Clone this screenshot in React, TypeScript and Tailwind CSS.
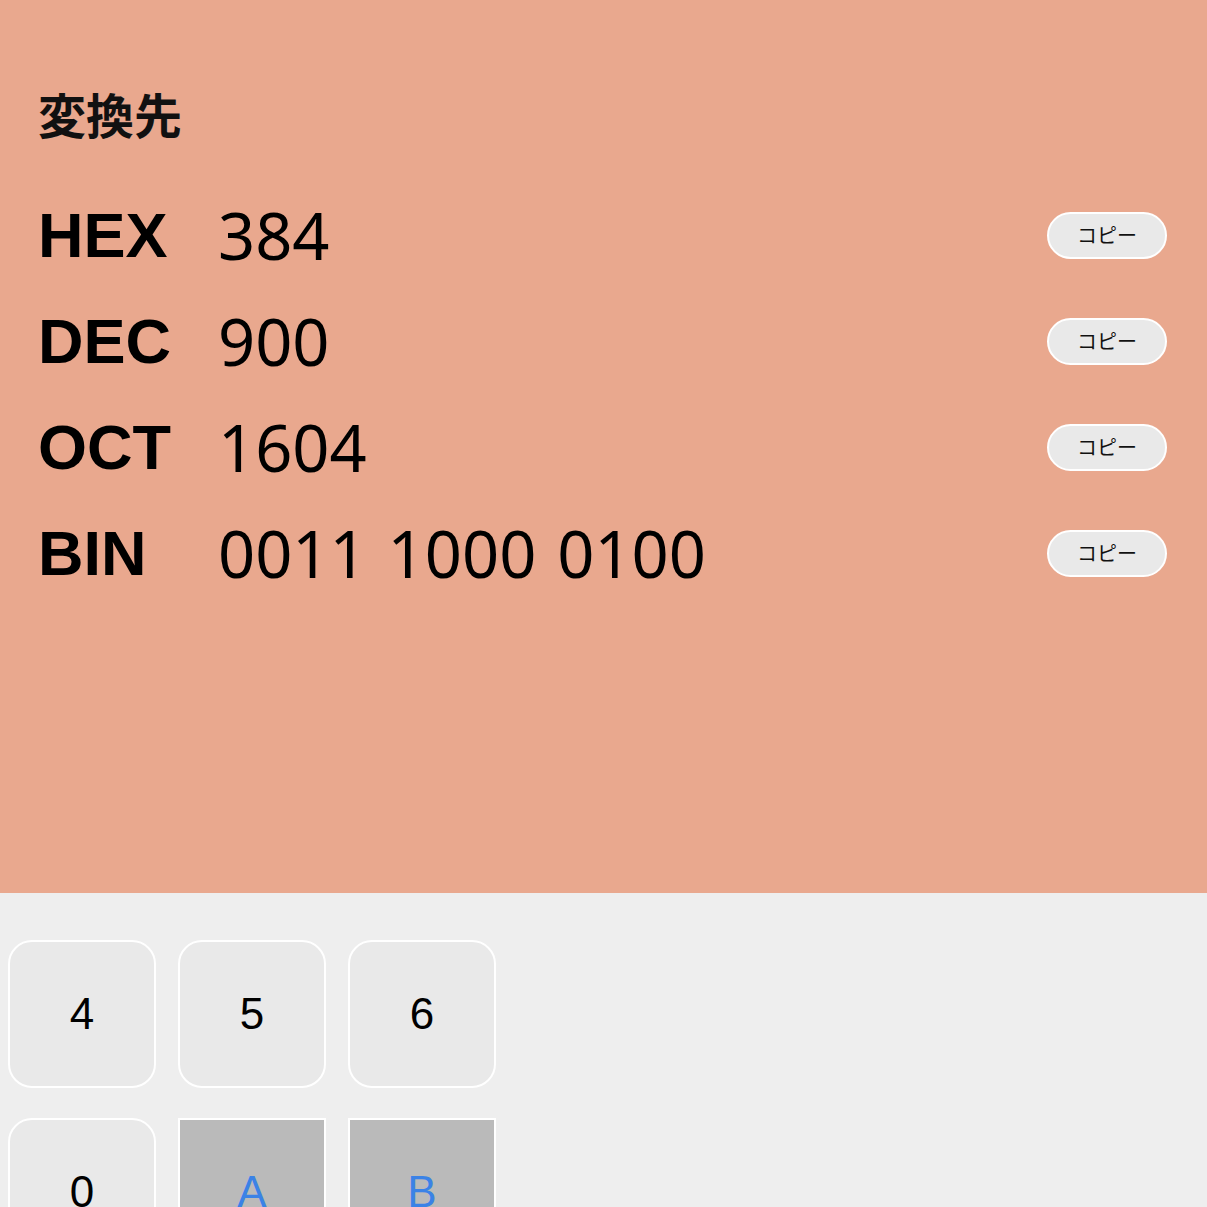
import React from 'react';

const rows = [
  { label: 'HEX', value: '384' },
  { label: 'DEC', value: '900' },
  { label: 'OCT', value: '1604' },
  { label: 'BIN', value: '0011 1000 0100' },
];

const keys = [
  { k: '4', disabled: false },
  { k: '5', disabled: false },
  { k: '6', disabled: false },
  { k: '0', disabled: false },
  { k: 'A', disabled: true },
  { k: 'B', disabled: true },
];

export default function App() {
  return (
    <div className="w-full h-[1207px] overflow-hidden bg-[#eeeeee] font-['Liberation_Sans','Noto_Sans_CJK_JP',sans-serif]">
      {/* 変換結果 */}
      <div className="h-[893px] bg-[#e9a88e] pt-[87px] pl-[38px] pr-[40px]">
        <h2 className="h-[52px] leading-[52px] text-[48px] font-bold text-[#111] font-['Noto_Sans_CJK_JP',sans-serif]">
          変換先
        </h2>
        <div className="mt-[43px] flex flex-col">
          {rows.map((r) => (
            <div key={r.label} className="h-[106px] flex items-center">
              <div className="w-[180px] text-[63px] font-bold leading-none text-black">{r.label}</div>
              <div className="flex-1 text-[65px] leading-none text-black font-['Noto_Sans',sans-serif] [word-spacing:4px]">{r.value}</div>
              <button className="w-[120px] h-[47px] rounded-full bg-[#e9e9e9] border-2 border-white text-[20px] text-[#111] font-['Noto_Sans_CJK_JP',sans-serif]">
                コピー
              </button>
            </div>
          ))}
        </div>
      </div>

      {/* キーパッド */}
      <div className="pt-[47px] pl-[8px] grid grid-cols-[repeat(3,148px)] gap-x-[22px] gap-y-[30px]">
        {keys.map(({ k, disabled }) =>
          disabled ? (
            <button
              key={k}
              className="h-[148px] bg-[#bababa] border-2 border-white text-[44px] text-[#3b82e6]"
            >
              {k}
            </button>
          ) : (
            <button
              key={k}
              className="h-[148px] rounded-[24px] bg-[#e9e9e9] border-2 border-white text-[44px] text-black"
            >
              {k}
            </button>
          )
        )}
      </div>
    </div>
  );
}
